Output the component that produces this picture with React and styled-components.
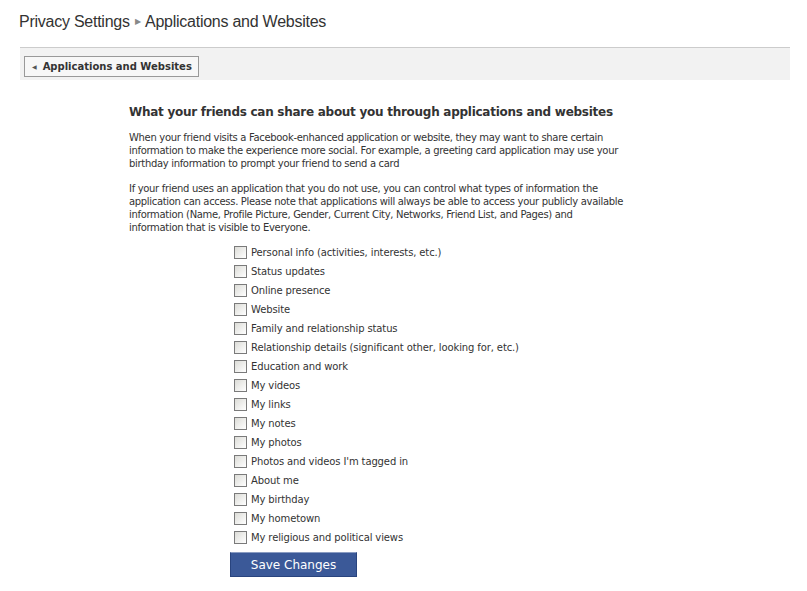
import React, { useState } from "react"
import styled, { createGlobalStyle } from "styled-components"

const items = [
  "Personal info (activities, interests, etc.)",
  "Status updates",
  "Online presence",
  "Website",
  "Family and relationship status",
  "Relationship details (significant other, looking for, etc.)",
  "Education and work",
  "My videos",
  "My links",
  "My notes",
  "My photos",
  "Photos and videos I'm tagged in",
  "About me",
  "My birthday",
  "My hometown",
  "My religious and political views",
]

const App = () => {
  const [checked, setChecked] = useState({})

  const toggle = i => setChecked({ ...checked, [i]: !checked[i] })

  return (
    <>
      <GlobalStyle />
      <Page>
        <Crumbs>
          Privacy Settings <Sep>▶</Sep> Applications and Websites
        </Crumbs>
        <BackBar>
          <BackButton>
            <Arrow>◀</Arrow>Applications and Websites
          </BackButton>
        </BackBar>
        <Content>
          <Heading>What your friends can share about you through applications and websites</Heading>
          <Para>
            When your friend visits a Facebook-enhanced application or website, they may want to share certain
            information to make the experience more social. For example, a greeting card application may use your
            birthday information to prompt your friend to send a card
          </Para>
          <Para>
            If your friend uses an application that you do not use, you can control what types of information the
            application can access. Please note that applications will always be able to access your publicly available
            information (Name, Profile Picture, Gender, Current City, Networks, Friend List, and Pages) and
            information that is visible to Everyone.
          </Para>
          <List>
            {items.map((label, i) => (
              <Row key={i}>
                <Box type="checkbox" checked={!!checked[i]} onChange={() => toggle(i)} />
                {label}
              </Row>
            ))}
            <SaveButton>Save Changes</SaveButton>
          </List>
        </Content>
      </Page>
    </>
  )
}

export default App

const GlobalStyle = createGlobalStyle`
  body {
    margin: 0;
    background: #fff;
    font-family: "DejaVu Sans", Tahoma, sans-serif;
  }
`

const Page = styled.div`
  width: 807px;
  height: 591px;
  overflow: hidden;
`

const Crumbs = styled.div`
  padding: 13px 0 0 19px;
  height: 22px;
  font-family: "Liberation Sans", Arial, sans-serif;
  font-size: 16px;
  letter-spacing: -0.25px;
  color: #333;
`

const Sep = styled.span`
  font-size: 8px;
  color: #888;
  vertical-align: 3px;
  margin: 0 1px;
`

const BackBar = styled.div`
  margin: 12px 17px 0 20px;
  height: 33px;
  border-top: 1px solid #ccc;
  background: #f2f2f2;
  padding: 6px 0 0 4px;
  box-sizing: border-box;
`

const BackButton = styled.div`
  display: inline-flex;
  align-items: center;
  height: 19px;
  padding: 0 6px 0 7px;
  border: 1px solid #999;
  background: #f7f7f7;
  font-family: "DejaVu Sans", Tahoma, sans-serif;
  font-size: 10px;
  font-weight: bold;
  color: #333;
`

const Arrow = styled.span`
  font-size: 6px;
  color: #555;
  margin-right: 6px;
`

const Content = styled.div`
  padding: 25px 0 0 129px;
  width: 498px;
`

const Heading = styled.h2`
  margin: 0 0 11px;
  white-space: nowrap;
  font-family: "DejaVu Sans", Tahoma, sans-serif;
  font-size: 12px;
  line-height: 15px;
  letter-spacing: -0.27px;
  font-weight: bold;
  color: #333;
`

const Para = styled.p`
  margin: 0 0 12px;
  font-family: "DejaVu Sans", Tahoma, sans-serif;
  font-size: 10px;
  line-height: 13px;
  letter-spacing: -0.32px;
  color: #333;

  &:last-of-type {
    margin-bottom: 0;
  }
`

const List = styled.div`
  padding: 9px 0 0 105px;
  display: flex;
  flex-direction: column;
`

const Row = styled.label`
  display: flex;
  align-items: center;
  height: 19px;
  font-family: "DejaVu Sans", Tahoma, sans-serif;
  font-size: 10px;
  letter-spacing: -0.12px;
  color: #333;
`

const Box = styled.input`
  appearance: none;
  width: 13px;
  height: 13px;
  margin: 0 4px 0 0;
  border: 1px solid #7a7a7a;
  background: linear-gradient(135deg, #dcdcd7 0%, #fff 100%);
  box-sizing: border-box;

  &:checked {
    background: #fff;
  }
`

const SaveButton = styled.button`
  align-self: flex-start;
  margin: 5px 0 0 -4px;
  width: 127px;
  height: 25px;
  border: 1px solid #29447e;
  border-top-color: #8a9cc2;
  background: #3b5998;
  color: #fff;
  font-family: "DejaVu Sans", Tahoma, sans-serif;
  font-size: 12px;
`
